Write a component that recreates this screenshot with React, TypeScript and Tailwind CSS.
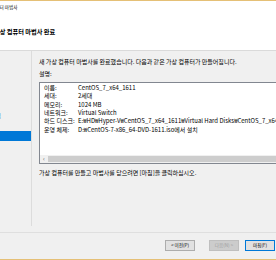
import React from "react";

const rows: [string, string][] = [
  ["이름:", "CentOS_7_x64_1611"],
  ["세대:", "2세대"],
  ["메모리:", "1024 MB"],
  ["네트워크:", "Virtual Switch"],
  ["하드 디스크:", "E:₩HD₩Hyper-V₩CentOS_7_x64_1611₩Virtual Hard Disks₩CentOS_7_x64_1611.vhdx"],
  ["운영 체제:", "D:₩CentOS-7-x86_64-DVD-1611.iso에서 설치"],
];

const navItems: [string, string][] = [
  ["시작하기 전에", "ml-[-70px]"],
  ["이름 및 위치 지정", "ml-[-70px]"],
  ["세대 지정", "ml-[-70px]"],
  ["메모리 할당", "ml-[-70px]"],
  ["네트워킹 구성", "ml-[-70px]"],
  ["가상 하드 디스크 연결", "ml-[-53px]"],
  ["설치 옵션", "ml-[-70px]"],
  ["요약", "ml-[-70px]"],
];

export default function App() {
  return (
    <div
      className="w-[276px] h-[260px] overflow-hidden bg-[#f0f0f0] flex flex-col text-[#000] leading-none"
      style={{ fontFamily: '"Noto Sans CJK KR", "Noto Sans", sans-serif' }}
    >
      <div className="h-px bg-[#e5c076] shrink-0" />
      {/* header */}
      <div className="h-[49px] bg-white shrink-0 flex flex-col overflow-hidden">
        <div className="h-[12px] flex items-center whitespace-nowrap text-[4.6px] ml-[-9px]">
          컴퓨터 마법사
        </div>
        <div className="mt-[15px] h-[8px] flex items-center whitespace-nowrap text-[6.2px] font-bold ml-[-6px]">
          가상 컴퓨터 마법사 완료
        </div>
      </div>
      <div className="h-px bg-[#dadada] shrink-0" />
      {/* middle */}
      <div className="flex h-[181px] shrink-0">
        <div className="w-[32px] h-[175px] border-r border-[#dcdcdc] shrink-0 overflow-hidden pt-[10px] flex flex-col">
          {navItems.map(([t, m], i) => (
            <div
              key={t}
              className={
                "h-[10px] w-[31px] shrink-0 flex items-center whitespace-nowrap text-[6px] overflow-hidden " +
                (i === navItems.length - 1 ? "bg-[#0078d7] text-white" : "")
              }
            >
              <span className={m}>{t}</span>
            </div>
          ))}
        </div>
        <div className="flex-1 pl-[7px] pt-[7px] flex flex-col overflow-hidden">
          <div className="h-[8px] flex items-center whitespace-nowrap text-[6px]">
            새 가상 컴퓨터 마법사를 완료했습니다. 다음과 같은 가상 컴퓨터가 만들어집니다.
          </div>
          <div className="mt-[4px] h-[8px] flex items-center whitespace-nowrap text-[6px]">
            설명:
          </div>
          <div className="mt-[4px] h-[82px] w-[260px] border border-[#828790] bg-white flex flex-col overflow-hidden">
            <div className="flex-1 pt-[1px] pl-[4px] flex flex-col">
              {rows.map(([k, v]) => (
                <div key={k} className="h-[8.3px] flex items-center whitespace-nowrap text-[6px]">
                  <span className="w-[34px] shrink-0">{k}</span>
                  <span>{v}</span>
                </div>
              ))}
            </div>
            <div className="h-[8px] bg-[#f0f0f0] flex items-center shrink-0">
              <div className="w-[8px] h-[8px] flex items-center justify-center text-[6px] text-[#606060]">‹</div>
              <div className="h-[6px] flex-1 bg-[#cdcdcd]" />
            </div>
          </div>
          <div className="mt-[5px] h-[8px] flex items-center whitespace-nowrap text-[6px]">
            가상 컴퓨터를 만들고 마법사를 닫으려면 [마침]을 클릭하십시오.
          </div>
        </div>
      </div>
      <div className="h-px bg-[#dfdfdf] shrink-0" />
      {/* bottom buttons */}
      <div className="flex-1 flex items-start pt-[7px] pl-[165px] whitespace-nowrap">
        <div className="w-[30px] h-[11px] border border-[#adadad] bg-[#e1e1e1] flex items-center justify-center text-[4.6px] shrink-0">
          &lt; 이전(P)
        </div>
        <div className="ml-[14px] w-[30px] h-[11px] border border-[#bfbfbf] bg-[#cccccc] flex items-center justify-center text-[4.6px] text-[#a0a0a0] shrink-0">
          다음(N) &gt;
        </div>
        <div className="ml-[6px] w-[30px] h-[11px] border border-[#0078d7] bg-[#e1e1e1] flex items-center justify-center text-[4.6px] shrink-0">
          마침(F)
        </div>
        <div className="ml-[6px] w-[30px] h-[11px] border border-[#adadad] bg-[#e1e1e1] flex items-center justify-center text-[4.6px] shrink-0">
          취소
        </div>
      </div>
      <div className="h-[1px] bg-[#e5c076] shrink-0" />
    </div>
  );
}
